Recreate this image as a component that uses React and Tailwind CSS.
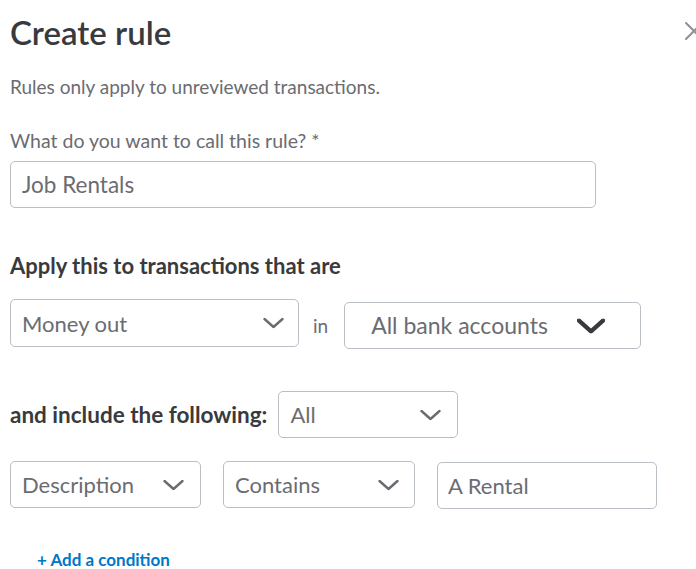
const Chevron = ({ className = "w-[21px] h-[11px]", stroke = "#6b6c72", sw = 2.4 }) => (
  <svg viewBox="0 0 21 11" className={className} fill="none" preserveAspectRatio="none">
    <path d="M1.5 1.5 L10.5 9.5 L19.5 1.5" stroke={stroke} strokeWidth={sw} strokeLinecap="round" strokeLinejoin="round" />
  </svg>
);

function Select({ label, className, chevronClass = "right-[14px]" }) {
  return (
    <div className={`relative flex items-center border border-[#babec5] rounded-[5px] bg-white ${className}`}>
      <span className="pl-[11px] text-[22px] text-[#6b6c72]">{label}</span>
      <span className={`absolute top-1/2 -translate-y-1/2 flex ${chevronClass}`}>
        <Chevron />
      </span>
    </div>
  );
}

export default function App() {
  return (
    <div className="w-[696px] h-[569px] bg-white overflow-hidden relative font-['Lato','Noto_Sans',sans-serif] text-[#393a3d]">
      <button className="absolute left-[685px] top-[22px] text-[#8d9096]">
        <svg viewBox="0 0 18 18" className="w-[18px] h-[18px]" fill="none">
          <path d="M1 1 L17 17 M17 1 L1 17" stroke="currentColor" strokeWidth="2" strokeLinecap="round" />
        </svg>
      </button>

      <div className="pl-[10px] pt-[12px] flex flex-col">
        <h1 className="text-[33px] leading-[40px] font-semibold text-[#393a3d]">Create rule</h1>

        <p className="mt-[23px] text-[19px] leading-[24px] text-[#6b6c72]">Rules only apply to unreviewed transactions.</p>

        <label className="mt-[30px] text-[19.5px] leading-[24px] text-[#6b6c72]">What do you want to call this rule? *</label>
        <div className="mt-[8px] w-[586px] h-[47px] border border-[#babec5] rounded-[5px] flex items-center pl-[11px] text-[22.5px] text-[#6b6c72]">
          Job Rentals
        </div>

        <h2 className="mt-[44px] text-[22px] leading-[28px] font-bold text-[#393a3d]">Apply this to transactions that are</h2>

        <div className="mt-[19px] flex items-start">
          <Select label="Money out" className="w-[289px] h-[48px]" chevronClass="right-[14px]" />
          <span className="ml-[14px] mt-[15px] text-[19px] leading-[24px] text-[#6b6c72]">in</span>
          <div className="ml-[16px] mt-[3px] relative flex items-center border border-[#babec5] rounded-[5px] h-[47px] w-[297px]">
            <span className="pl-[26px] text-[23px] text-[#6b6c72]">All bank accounts</span>
            <span className="absolute right-[35px] top-1/2 -translate-y-1/2 flex">
              <Chevron className="w-[28px] h-[15px]" stroke="#393a3d" sw={3.2} />
            </span>
          </div>
        </div>

        <div className="mt-[42px] flex items-center">
          <span className="text-[22.5px] font-bold text-[#393a3d]">and include the following:</span>
          <Select label="All" className="ml-[11px] w-[180px] h-[47px]" chevronClass="right-[16px]" />
        </div>

        <div className="mt-[23px] flex items-start">
          <Select label="Description" className="w-[191px] h-[47px]" chevronClass="right-[16px]" />
          <Select label="Contains" className="ml-[22px] w-[192px] h-[47px]" chevronClass="right-[15px]" />
          <div className="ml-[22px] mt-[1px] w-[220px] h-[47px] border border-[#babec5] rounded-[5px] flex items-center pl-[10px] text-[22px] text-[#6b6c72]">
            A Rental
          </div>
        </div>

        <button className="mt-[41px] ml-[27px] self-start text-[17px] leading-[20px] font-bold text-[#0077c5]">+ Add a condition</button>
      </div>
    </div>
  );
}
